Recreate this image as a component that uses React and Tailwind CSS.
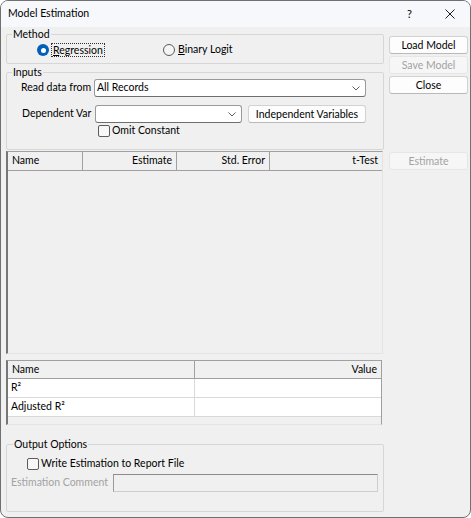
import React from 'react';

const font = "font-['Lato','Liberation_Sans',sans-serif]";

function Chevron() {
  return (
    <svg width="8" height="5" viewBox="0 0 8 5" className="shrink-0">
      <path d="M0.5 0.5 L4 4 L7.5 0.5" stroke="#5f5f5f" strokeWidth="1" fill="none" />
    </svg>
  );
}

function Button({ children, disabled }) {
  return (
    <div
      className={
        disabled
          ? 'h-[18px] whitespace-nowrap rounded-[3px] border border-[#e6e6e6] bg-[#f6f6f6] text-center leading-[16px] text-[#a3a3a3]'
          : 'h-[18px] whitespace-nowrap rounded-[3px] border border-[#d2d2d2] border-b-[#b9b9b9] bg-[#fdfdfd] text-center leading-[16px] text-black'
      }
    >
      {children}
    </div>
  );
}

function Checkbox() {
  return <div className="h-[12px] w-[12px] shrink-0 rounded-[2px] border border-[#5c5c5c] bg-[#f7f7f7]" />;
}

function HeadCell({ w, right, children, last }) {
  return (
    <div
      className={
        'h-full shrink-0 whitespace-nowrap border-b border-[#a0a0a0] px-[4px] leading-[17px] ' +
        (last ? '' : 'border-r ') +
        (right ? 'text-right' : 'text-left')
      }
      style={{ width: w }}
    >
      {children}
    </div>
  );
}

export default function App() {
  return (
    <div className={`${font} h-[518px] w-[471px] overflow-hidden rounded-[8px] border border-[#707070] bg-[#f0f0f0] text-[10.5px] text-black`}>
      {/* title bar */}
      <div className="flex h-[26px] items-center bg-[#f6f8fb] pl-[7px]">
        <span className="text-[10.5px]">Model Estimation</span>
        <span className="ml-auto text-[11px]">?</span>
        <svg width="10" height="10" viewBox="0 0 10 10" className="ml-[33px] mr-[15px]">
          <path d="M0.5 0.5 L9.5 9.5 M9.5 0.5 L0.5 9.5" stroke="#1c1c1c" strokeWidth="1" />
        </svg>
      </div>

      <div className="flex">
        {/* left column */}
        <div className="ml-[5px] w-[378px]">
          <fieldset className="rounded-[2px] border border-[#d6d6d6] pb-[6px]">
            <legend className="ml-[5px] px-[1px] leading-[14px]">Method</legend>
            <div className="mt-[2px] flex h-[14px] items-center pl-[30px]">
              <div className="flex w-[126px] items-center">
                <div className="flex h-[12px] w-[12px] items-center justify-center rounded-full bg-[#005fb8]">
                  <div className="h-[5px] w-[5px] rounded-full bg-white" />
                </div>
                <span className="ml-[2px] border border-dotted border-[#333] px-[1px] leading-[12px]">
                  <span className="underline">R</span>egression
                </span>
              </div>
              <div className="flex items-center">
                <div className="h-[12px] w-[12px] rounded-full border border-[#5a5a5a] bg-[#f5f5f5]" />
                <span className="ml-[3px]">
                  <span className="underline">B</span>inary Logit
                </span>
              </div>
            </div>
          </fieldset>

          <fieldset className="mt-[1px] rounded-[2px] border border-[#d6d6d6] pb-[12px]">
            <legend className="ml-[5px] px-[1px] leading-[14px]">Inputs</legend>
            <div className="flex h-[18px] items-center pl-[14px]">
              <span className="w-[73px] shrink-0 whitespace-nowrap">Read data from</span>
              <div className="flex h-[18px] w-[272px] items-center justify-between rounded-[3px] border border-[#9a9a9a] border-b-[#6e6e6e] bg-white pl-[2px] pr-[5px]">
                <span>All Records</span>
                <Chevron />
              </div>
            </div>
            <div className="mt-[8px] flex h-[18px] items-center pl-[15px]">
              <span className="w-[73px] shrink-0 whitespace-nowrap">Dependent Var</span>
              <div className="flex h-[18px] w-[147px] items-center justify-end rounded-[3px] border border-[#9a9a9a] border-b-[#6e6e6e] bg-white pr-[5px]">
                <Chevron />
              </div>
              <div className="ml-[6px] w-[118px]">
                <Button>Independent Variables</Button>
              </div>
            </div>
            <div className="mt-[2px] flex h-[12px] items-center pl-[91px]">
              <Checkbox />
              <span className="ml-[2px]">Omit Constant</span>
            </div>
          </fieldset>

          {/* coefficients table */}
          <div className="mt-[1px] h-[203px] w-[377px] border-b border-l-2 border-r border-t border-b-[#e4e4e4] border-l-[#767676] border-r-[#e4e4e4] border-t-[#a0a0a0]">
            <div className="flex h-[19px]">
              <HeadCell w={75}>Name</HeadCell>
              <HeadCell w={94} right>Estimate</HeadCell>
              <HeadCell w={93} right>Std. Error</HeadCell>
              <HeadCell w={112} right last>t-Test</HeadCell>
            </div>
          </div>

          {/* statistics table */}
          <div className="mt-[6px] h-[65px] w-[376px] border-b border-l-2 border-r border-t border-b-[#e4e4e4] border-l-[#767676] border-r-[#a0a0a0] border-t-[#a0a0a0]">
            <div className="flex h-[18px]">
              <HeadCell w={187}>Name</HeadCell>
              <HeadCell w={186} right last>Value</HeadCell>
            </div>
            {['R²', 'Adjusted R²'].map((label) => (
              <div key={label} className="flex h-[19px] border-b border-[#d9d9d9] bg-white">
                <div className="w-[187px] border-r border-[#d9d9d9] pl-[3px] leading-[16px]">{label}</div>
                <div className="flex-1" />
              </div>
            ))}
          </div>

          <fieldset className="mt-[12px] rounded-[2px] border border-[#d6d6d6] pb-[19px]">
            <legend className="ml-[6px] px-[1px] leading-[14px]">Output Options</legend>
            <div className="mt-[7px] flex h-[12px] items-center pl-[20px]">
              <Checkbox />
              <span className="ml-[2px]">Write Estimation to Report File</span>
            </div>
            <div className="mt-[4px] flex h-[18px] items-center pl-[4px]">
              <span className="w-[102px] shrink-0 whitespace-nowrap text-[#a3a3a3]">Estimation Comment</span>
              <div className="h-[18px] w-[265px] border border-[#cdcdcd] border-l-[#9a9a9a] border-t-[#8c8c8c] bg-[#f0f0f0]" />
            </div>
          </fieldset>
        </div>

        {/* right column */}
        <div className="ml-[5px] w-[79px]">
          <div className="mt-[9px] flex flex-col gap-[2px]">
            <Button>Load Model</Button>
            <Button disabled>Save Model</Button>
            <Button>Close</Button>
          </div>
          <div className="mt-[58px]">
            <Button disabled>Estimate</Button>
          </div>
        </div>
      </div>
    </div>
  );
}
